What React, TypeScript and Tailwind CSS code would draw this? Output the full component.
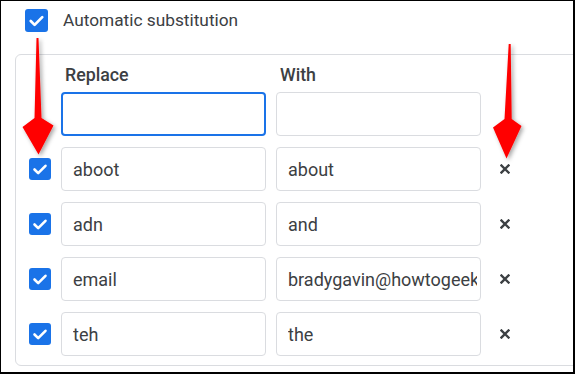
import React from "react";

const font = { fontFamily: "Roboto, 'Liberation Sans', sans-serif" };

function Check({ size = 22 }: { size?: number }) {
  return (
    <div
      className="flex shrink-0 items-center justify-center rounded-[3px] bg-[#1a73e8]"
      style={{ width: size, height: size }}
    >
      <svg width={size} height={size} viewBox="0 0 22 22">
        <path d="M5.5 11.5l3.7 3.7 7.3-7.4" fill="none" stroke="#fff" strokeWidth="2.6" strokeLinecap="round" strokeLinejoin="round" />
      </svg>
    </div>
  );
}

function XIcon() {
  return (
    <svg width="10" height="10" viewBox="0 0 10 10">
      <path d="M1.5 1.5l7 7M8.5 1.5l-7 7" stroke="#3c4043" strokeWidth="2.4" strokeLinecap="square" />
    </svg>
  );
}

function Field({ value, focused }: { value: string; focused?: boolean }) {
  return (
    <input
      readOnly
      value={value}
      className={
        "h-[44px] w-[205px] rounded-[4px] bg-white pl-[11px] pr-[3px] text-[18px] text-[#3c4043] outline-none " +
        (focused ? "border-2 border-[#1a73e8]" : "border border-[#dadce0]")
      }
      style={font}
    />
  );
}

const rows = [
  ["aboot", "about"],
  ["adn", "and"],
  ["email", "bradygavin@howtogeek.com"],
  ["teh", "the"],
];

export default function App() {
  return (
    <div
      className="relative h-[374px] w-[575px] overflow-hidden border-t border-l border-r-2 border-b-2 border-black bg-white"
      style={font}
    >
      <div className="flex items-center pl-[24px] pt-[8px]">
        <Check size={23} />
        <span className="ml-[15px] text-[17.3px] leading-[23px] text-[#3c4043]">Automatic substitution</span>
      </div>
      <div className="ml-[14px] mt-[22px] w-[620px] rounded-[6px] border border-[#dadce0] pb-[9px] pl-[13px] pt-[8px]">
        <div className="grid grid-cols-[22px_205px_205px_28px] gap-x-[10px]">
          <div />
          <div className="pl-[4px] text-[17.8px] font-medium leading-[24px] text-[#3c4043]">Replace</div>
          <div className="pl-[4px] text-[17.8px] font-medium leading-[24px] text-[#3c4043]">With</div>
          <div />
          <div className="mt-[5px]" />
          <div className="mt-[5px]">
            <Field value="" focused />
          </div>
          <div className="mt-[5px]">
            <Field value="" />
          </div>
          <div />
          {rows.map(([a, b]) => (
            <React.Fragment key={a}>
              <div className="mt-[11px] flex items-center">
                <Check />
              </div>
              <div className="mt-[11px]">
                <Field value={a} />
              </div>
              <div className="mt-[11px]">
                <Field value={b} />
              </div>
              <div className="mt-[11px] flex items-center justify-center">
                <XIcon />
              </div>
            </React.Fragment>
          ))}
        </div>
      </div>
      <svg className="pointer-events-none absolute left-[-1px] top-[-1px]" width="575" height="374">
        <defs>
          <filter id="sh" x="-50%" y="-20%" width="200%" height="140%">
            <feDropShadow dx="2" dy="2" stdDeviation="2" floodColor="#000" floodOpacity="0.35" />
          </filter>
        </defs>
        <polygon
          points="36.5,38 38.5,38 41.5,118 53.5,125.5 38.5,154.5 22.5,127 34.5,118"
          fill="#ff0000"
          filter="url(#sh)"
        />
        <polygon
          points="508.7,44 510.7,44 511.7,119 521.5,126 506.5,158.5 493,127.5 504.5,119"
          fill="#ff0000"
          filter="url(#sh)"
        />
      </svg>
    </div>
  );
}
